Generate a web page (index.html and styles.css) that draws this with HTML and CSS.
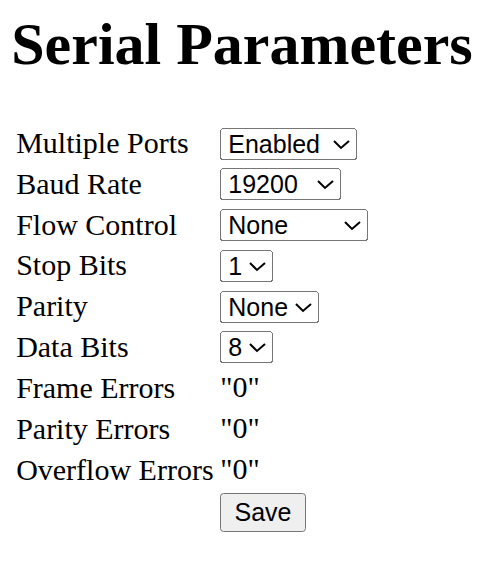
FILE: index.html
```html
<!DOCTYPE html>
<html>
<head>
<meta charset="utf-8">
<title>Serial Parameters</title>
<link rel="stylesheet" href="styles.css">
</head>
<body class="page">
<h1 class="title">Serial Parameters</h1>
<form class="form">
<table class="params">
<tr><td class="label">Multiple Ports</td><td><select class="field"><option>Enabled</option><option>Disabled</option></select></td></tr>
<tr><td class="label">Baud Rate</td><td><select class="field"><option>9600</option><option selected>19200</option><option>38400</option><option>57600</option><option>115200</option></select></td></tr>
<tr><td class="label">Flow Control</td><td><select class="field"><option>None</option><option>Xon/Xoff</option><option>Hardware</option></select></td></tr>
<tr><td class="label">Stop Bits</td><td><select class="field"><option>1</option><option>2</option></select></td></tr>
<tr><td class="label">Parity</td><td><select class="field"><option>None</option><option>Odd</option><option>Even</option></select></td></tr>
<tr><td class="label">Data Bits</td><td><select class="field"><option>7</option><option selected>8</option></select></td></tr>
<tr><td class="label">Frame Errors</td><td class="value">"0"</td></tr>
<tr><td class="label">Parity Errors</td><td class="value">"0"</td></tr>
<tr><td class="label">Overflow Errors</td><td class="value">"0"</td></tr>
<tr><td></td><td><button type="button" class="save">Save</button></td></tr>
</table>
</form>
</body>
</html>
```
FILE: styles.css
```css
html {
  zoom: 1.875;
}
.page {
  margin: 0 6px;
  font-family: "Liberation Serif", "Times New Roman", serif;
  font-size: 16px;
  line-height: 1.107;
  color: #000;
  background: #fff;
}
.title {
  font-family: "Liberation Serif", "Times New Roman", serif;
  font-size: 32px;
  font-weight: bold;
  line-height: 1.107;
  margin: 5.7px 0 23.3px;
}
.form {
  margin: 0;
}
.params {
  border-collapse: separate;
  border-spacing: 2px;
}
.params td {
  padding: 1px;
}
.params td.value {
  line-height: 1.14;
}
.field, .save {
  font-family: "Liberation Sans", Arial, sans-serif;
  font-size: 13.333px;
}
.save {
  padding: 1px 6px;
}
```
